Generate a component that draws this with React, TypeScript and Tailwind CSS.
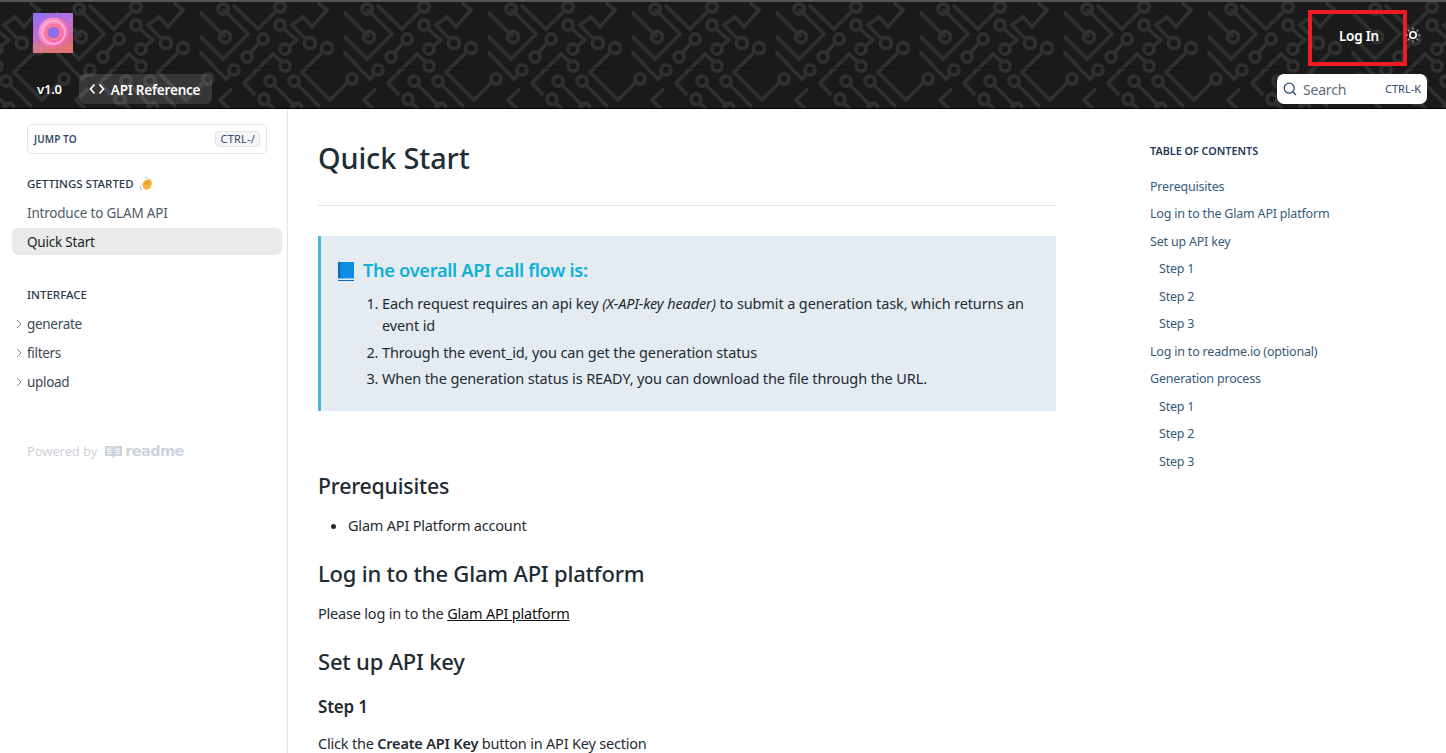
import React from "react";

const tiles = Array.from({ length: 11 }, (_, i) => 56 - 144 + i * 144);

function Circuit() {
  return (
    <svg className="absolute inset-0 w-full h-full" width="1446" height="109" aria-hidden="true">
      <defs>
        <g id="tile" fill="none" stroke="#303030" strokeWidth="3.8">
          <path d="M25 35 L0 10" />
          <circle cx="25" cy="35" r="5.5" />
          <path d="M23 7 L48 32 L23 57 L0 34" />
          <circle cx="23" cy="7" r="5" />
          <path d="M33 3 L58 27 L77 8" />
          <circle cx="80" cy="5" r="5" />
          <circle cx="80" cy="23" r="5" />
          <path d="M84 27 L97 38 L88 45" />
          <circle cx="85" cy="47" r="5" />
          <circle cx="63" cy="37" r="5" />
          <path d="M59 41 L50 51" />
          <circle cx="47" cy="55" r="5" />
          <path d="M106 37 L92 23 L103 15 L112 25 L127 8 L118 1" />
          <circle cx="110" cy="41" r="5.5" />
          <path d="M0 50 L26 77 L31 72" />
          <circle cx="34" cy="68" r="5" />
          <path d="M82 60 L73 52 L44 81 L55 93" />
          <circle cx="85" cy="64" r="5" />
          <path d="M32 87 L20 98 L30 108" />
          <circle cx="70" cy="79" r="5" />
          <path d="M74 83 L96 105" />
          <circle cx="97" cy="106" r="5" />
          <circle cx="94" cy="79" r="5" />
          <path d="M98 83 L120 105" />
          <circle cx="64" cy="97" r="5" />
          <path d="M68 101 L75 108" />
          <path d="M123 50 L102 70 L130 98 L148 80" />
          <circle cx="127" cy="46" r="5.5" />
          <circle cx="152" cy="77" r="5" />
        </g>
      </defs>
      {tiles.map((x) => (
        <use key={x} href="#tile" x={x} y="0" />
      ))}
    </svg>
  );
}

function Logo() {
  return (
    <svg width="40" height="40" viewBox="0 0 40 40" className="shrink-0">
      <defs>
        <linearGradient id="lg" x1="0" y1="0" x2="0.5" y2="1">
          <stop offset="0" stopColor="#8b6ff5" />
          <stop offset="0.55" stopColor="#c46fd0" />
          <stop offset="1" stopColor="#e0667e" />
        </linearGradient>
        <linearGradient id="ring" x1="0" y1="0" x2="1" y2="1">
          <stop offset="0" stopColor="#f8a0c8" />
          <stop offset="0.5" stopColor="#fa7fc0" />
          <stop offset="1" stopColor="#f0609f" />
        </linearGradient>
      </defs>
      <rect width="40" height="40" fill="url(#lg)" />
      <rect y="30" width="40" height="10" fill="#e6955f" opacity="0.3" />
      <circle cx="20.500" cy="19.500" r="15" fill="url(#ring)" />
      <circle cx="20.500" cy="19.500" r="11.500" fill="none" stroke="#ffb4dc" strokeWidth="1.500" />
      <circle cx="20.500" cy="19.500" r="8.500" fill="#f4609f" />
      <circle cx="20.500" cy="19.500" r="7" fill="none" stroke="#fa9a80" strokeWidth="1" />
      <circle cx="20.500" cy="19.500" r="5.500" fill="#8a70ee" />
    </svg>
  );
}

function Sun() {
  return (
    <svg width="16" height="16" viewBox="0 0 16 16" fill="none" strokeLinecap="round" className="shrink-0">
      <circle cx="8" cy="8" r="3.200" stroke="#fff" strokeWidth="1.600" />
      <path d="M8 1v1.500M8 13.500V15M1 8h1.500M13.500 8H15M3 3l1 1M12 12l1 1M3 13l1-1M12 4l1-1" stroke="#a8a8a8" strokeWidth="1.200" />
    </svg>
  );
}

function Chevron() {
  return (
    <svg width="6" height="10" viewBox="0 0 6 10" fill="none" stroke="#7a8794" strokeWidth="1" className="absolute left-[16px] top-[9px]">
      <path d="M1 1l4 4-4 4" />
    </svg>
  );
}

function Wave() {
  return (
    <svg width="14" height="14" viewBox="0 0 14 14" className="inline-block ml-[5px] align-[-2px]">
      <path d="M3 7.500 L6 3 L7.500 3.500 L8 2 L9.500 2.500 L11 1.500 L12 3 L13 7 L11.500 11 L8 13 L5 12 Z" fill="#f5b53c" />
      <path d="M6 7 L8.500 3.500 M8 8 L10.500 4" stroke="#c9861f" strokeWidth="0.800" />
      <path d="M1 9 Q1.300 11.500 3 13" stroke="#7fbde8" strokeWidth="0.900" fill="none" />
      <path d="M6 1.500 Q7 .5 8.500 .8" stroke="#7fbde8" strokeWidth="0.900" fill="none" />
    </svg>
  );
}

function Book() {
  return (
    <svg width="18" height="20" viewBox="0 0 18 20" className="shrink-0">
      <rect x="1" y="1" width="16" height="17" fill="#0c8fe3" />
      <rect x="1" y="1" width="2.500" height="17" fill="#0a6fc0" />
      <rect x="1" y="17.400" width="16" height="1.600" fill="#d6ecfa" />
      <rect x="1" y="19" width="16" height="1" fill="#0a6fc0" />
    </svg>
  );
}

function ReadmeMark() {
  return (
    <svg width="17" height="14" viewBox="0 0 17 14" fill="#cfd4da" className="shrink-0">
      <path d="M0 1h6.500q2 0 2 1.500Q8.500 1 10.500 1H17v10h-6q-1.500 0-2.500 2-1-2-2.500-2H0z" />
      <path d="M2 4h4.500M2 6.200h4.500M2 8.400h4.500M10.500 4H15M10.500 6.200H15M10.500 8.400H15" stroke="#fff" strokeWidth="1" />
    </svg>
  );
}

const toc: [string, boolean][] = [
  ["Prerequisites", false],
  ["Log in to the Glam API platform", false],
  ["Set up API key", false],
  ["Step 1", true],
  ["Step 2", true],
  ["Step 3", true],
  ["Log in to readme.io (optional)", false],
  ["Generation process", false],
  ["Step 1", true],
  ["Step 2", true],
  ["Step 3", true],
];

export default function App() {
  return (
    <div className="h-[753px] w-[1446px] overflow-hidden bg-white text-[#1f2b33] font-['Noto_Sans','Open_Sans',sans-serif] text-[14.5px] tracking-[-0.2px]">
      <header className="relative h-[109px] bg-[#1a1a1a] border-t-2 border-t-[#555] border-b border-b-black overflow-hidden">
        <Circuit />
        <div className="relative flex h-[66px] items-start justify-between border-b border-b-[rgba(0,0,0,0.2)] pl-[33px] pr-[25px] pt-[11px]">
          <Logo />
          <div className="-mt-[3px] flex items-start">
            <div className="flex h-[56px] w-[99px] items-center justify-center border-[4px] border-[#ed1c24] pb-[4px] pl-[3px] text-[13.5px] font-semibold text-white">Log In</div>
            <span className="-ml-[2px] mt-[17px]"><Sun /></span>
          </div>
        </div>
        <div className="relative flex h-[40px] items-center justify-between pl-[37px] pr-[19px] pt-[2px]">
          <div className="flex items-center">
            <span className="pt-[2px] text-[13px] font-semibold text-white">v1.0</span>
            <span className="ml-[17px] flex h-[30px] w-[133px] items-center gap-[6px] rounded-[6px] bg-[rgba(255,255,255,0.13)] pl-[10px] text-[13.5px] font-semibold text-white">
              <svg width="16" height="12" viewBox="0 0 16 12" fill="none" stroke="#fff" strokeWidth="1.700">
                <path d="M5.500 1.500L1.500 6l4 4.500M10.500 1.500l4 4.500-4 4.500" />
              </svg>
              <span className="pt-[2px]">API Reference</span>
            </span>
          </div>
          <div className="flex h-[30px] w-[150px] items-center rounded-[7px] bg-white pl-[6px] pr-[6px]">
            <svg width="14" height="14" viewBox="0 0 14 14" fill="none" stroke="#2b4a73" strokeWidth="1.300">
              <circle cx="6.200" cy="6.200" r="5" />
              <path d="M10 10l3 3" />
            </svg>
            <span className="ml-[6px] text-[14px] text-[#5b6a7c]">Search</span>
            <span className="ml-auto text-[11px] tracking-normal text-[#2b4a73]">CTRL-K</span>
          </div>
        </div>
      </header>

      <div className="flex h-[644px]">
        <aside className="relative w-[288px] shrink-0 border-r border-r-[#e5e5e5] pt-[15px]">
          <div className="ml-[27px] flex h-[30px] w-[240px] items-center justify-between rounded-[5px] border border-[#e3e5e8] pl-[6px] pr-[6px]">
            <span className="text-[10px] font-semibold tracking-[0.1px] text-[#384a63]">JUMP TO</span>
            <span className="rounded-[4px] border border-[#dfe2e6] bg-[#f4f5f7] px-[4px] text-[11px] leading-[14px] tracking-[0.2px] text-[#384a63]">CTRL-/</span>
          </div>
          <div className="ml-[27px] mt-[21px] flex h-[18px] items-center text-[11.5px] font-medium tracking-normal text-[#2a3a4d]">
            GETTINGS STARTED<Wave />
          </div>
          <div className="mx-[12px] mt-[6px] w-[270px]">
            <div className="flex h-[29px] items-center pl-[15px] text-[13.5px] text-[#4f5b66]">Introduce to GLAM API</div>
            <div className="flex h-[27px] items-center rounded-[6px] bg-[#eaeaea] pl-[15px] pt-[1px] text-[13.5px] text-[#1a1f24]">Quick Start</div>
          </div>
          <div className="ml-[27px] mt-[31px] flex h-[18px] items-center text-[11.5px] font-medium tracking-normal text-[#2a3a4d]">INTERFACE</div>
          <div className="mt-[6px]">
            {["generate", "filters", "upload"].map((t) => (
              <div key={t} className="relative flex h-[29px] items-center pl-[27px] text-[13.5px] text-[#3e4a55] tracking-[-0.3px]">
                <Chevron />
                {t}
              </div>
            ))}
          </div>
          <div className="ml-[27px] mt-[45px] flex h-[20px] items-center text-[13px] text-[#cdd2d8] tracking-[-0.1px]">
            Powered by
            <span className="ml-[8px]"><ReadmeMark /></span>
            <span className="ml-[3px] font-['DejaVu_Sans',sans-serif] text-[14.5px] font-bold tracking-[-0.6px] text-[#cfd4da]">readme</span>
          </div>
        </aside>

        <main className="w-[768px] shrink-0 overflow-hidden pl-[30px]">
          <h1 className="mt-[27px] h-[44px] text-[28.8px] leading-[44px] font-medium tracking-[-0.1px] text-[#1f2d36]">Quick Start</h1>
          <div className="mt-[25px] h-px w-[738px] bg-[#e3e5e8]" />
          <div className="mt-[30px] h-[175px] w-[738px] border-l-[3px] border-l-[#46b8da] bg-[#e4ecf2] pl-[16px] pt-[22px]">
            <div className="flex h-[26px] items-center gap-[8px] text-[18.2px] font-semibold tracking-[-0.3px] text-[#0fb0d6]">
              <Book />
              The overall API call flow is:
            </div>
            <ol className="mt-[8px] list-decimal pl-[45px] leading-[22px] tracking-[-0.12px]">
              <li className="mb-[5px]">Each request requires an api key <em>(X-API-key header)</em> to submit a generation task, which returns an event id</li>
              <li className="mb-[4px]">Through the event_id, you can get the generation status</li>
              <li>When the generation status is READY, you can download the file through the URL.</li>
            </ol>
          </div>
          <h2 className="mt-[60px] h-[30px] text-[21.3px] leading-[30px] font-medium">Prerequisites</h2>
          <ul className="mt-[13px] list-disc pl-[30px] leading-[22px]"><li>Glam API Platform account</li></ul>
          <h2 className="mt-[22px] h-[30px] text-[22px] leading-[30px] font-medium">Log in to the Glam API platform</h2>
          <p className="mt-[14px] h-[22px] leading-[22px]">Please log in to the <a className="text-[#111] underline">Glam API platform</a></p>
          <h2 className="mt-[22px] h-[30px] text-[22px] leading-[30px] font-medium">Set up API key</h2>
          <h3 className="mt-[19px] h-[24px] text-[17px] leading-[24px] font-semibold">Step 1</h3>
          <p className="mt-[13px] leading-[22px]">Click the <strong className="font-semibold">Create API Key</strong> button in API Key section</p>
        </main>

        <nav className="ml-[94px] pt-[35px] text-[12.5px] text-[#385a78]">
          <div className="h-[14px] text-[10.8px] leading-[14px] font-semibold tracking-normal text-[#1f3a5c]">TABLE OF CONTENTS</div>
          <div className="mt-[15.6px]">
            {toc.map(([t, sub], i) => (
              <div key={i} className={sub ? "flex h-[27.5px] items-center pl-[9px]" : "flex h-[27.5px] items-center"}>{t}</div>
            ))}
          </div>
        </nav>
      </div>
    </div>
  );
}
